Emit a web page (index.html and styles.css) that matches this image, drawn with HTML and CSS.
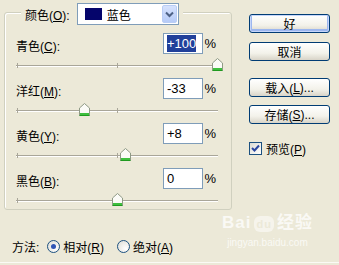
FILE: index.html
```html
<!DOCTYPE html>
<html lang="zh-CN">
<head>
    <meta charset="UTF-8">
    <title>可选颜色</title>
    <link rel="stylesheet" href="styles.css">
</head>
<body>
    <div class="dialog">
        <!-- Colour group -->
        <div class="group">
            <div class="group-head">
                <span class="head-label">颜色(<u>O</u>):</span>
                <div class="select">
                    <span class="swatch"></span>
                    <span class="select-text">蓝色</span>
                    <span class="select-btn">
                        <svg width="9" height="7" viewBox="0 0 9 7"><path d="M1 1.5 L4.5 5 L8 1.5" fill="none" stroke="#4d6185" stroke-width="2"/></svg>
                    </span>
                </div>
            </div>

            <div class="row">
                <div class="row-top">
                    <span class="row-label">青色(<u>C</u>):</span>
                    <span class="field"><span class="sel">+100</span></span>
                    <span class="pct">%</span>
                </div>
                <div class="slider"><span class="track"></span><svg class="thumb" style="left: 196px" width="11" height="13" viewBox="0 0 11 13"><path d="M0.5 12.5 V5 L5.5 0.5 L10.5 5 V12.5 Z" fill="#fbfbf7" stroke="#8f9a86"/><path d="M1 10.5 H10 M1 11.5 H10" stroke="#3fbf3f"/><path d="M0.5 12.5 H10.5" stroke="#1f9a1f"/></svg></div>
            </div>

            <div class="row">
                <div class="row-top">
                    <span class="row-label">洋红(<u>M</u>):</span>
                    <span class="field">-33</span>
                    <span class="pct">%</span>
                </div>
                <div class="slider"><span class="track"></span><svg class="thumb" style="left: 63px" width="11" height="13" viewBox="0 0 11 13"><path d="M0.5 12.5 V5 L5.5 0.5 L10.5 5 V12.5 Z" fill="#fbfbf7" stroke="#8f9a86"/><path d="M1 10.5 H10 M1 11.5 H10" stroke="#3fbf3f"/><path d="M0.5 12.5 H10.5" stroke="#1f9a1f"/></svg></div>
            </div>

            <div class="row">
                <div class="row-top">
                    <span class="row-label">黄色(<u>Y</u>):</span>
                    <span class="field">+8</span>
                    <span class="pct">%</span>
                </div>
                <div class="slider"><span class="track"></span><svg class="thumb" style="left: 104px" width="11" height="13" viewBox="0 0 11 13"><path d="M0.5 12.5 V5 L5.5 0.5 L10.5 5 V12.5 Z" fill="#fbfbf7" stroke="#8f9a86"/><path d="M1 10.5 H10 M1 11.5 H10" stroke="#3fbf3f"/><path d="M0.5 12.5 H10.5" stroke="#1f9a1f"/></svg></div>
            </div>

            <div class="row">
                <div class="row-top">
                    <span class="row-label">黑色(<u>B</u>):</span>
                    <span class="field">0</span>
                    <span class="pct">%</span>
                </div>
                <div class="slider"><span class="track"></span><svg class="thumb" style="left: 96px" width="11" height="13" viewBox="0 0 11 13"><path d="M0.5 12.5 V5 L5.5 0.5 L10.5 5 V12.5 Z" fill="#fbfbf7" stroke="#8f9a86"/><path d="M1 10.5 H10 M1 11.5 H10" stroke="#3fbf3f"/><path d="M0.5 12.5 H10.5" stroke="#1f9a1f"/></svg></div>
            </div>
        </div>

        <!-- Buttons -->
        <div class="side">
            <div class="btn btn-default">好</div>
            <div class="btn">取消</div>
            <div class="btn btn-gap">载入(<u>L</u>)...</div>
            <div class="btn">存储(<u>S</u>)...</div>
            <label class="check">
                <span class="checkbox">
                    <svg width="9" height="9" viewBox="0 0 9 9"><path d="M1 4 L3.5 6.5 L8 1.5" fill="none" stroke="#2a46a0" stroke-width="2"/></svg>
                </span>
                <span>预览(<u>P</u>)</span>
            </label>
        </div>

        <!-- Method -->
        <div class="method">
            <span class="method-label">方法:</span>
            <span class="radio"><span class="dot"></span></span>
            <span class="radio-text">相对(<u>R</u>)</span>
            <span class="radio"></span>
            <span class="radio-text">绝对(<u>A</u>)</span>
        </div>

        <!-- Watermark -->
        <div class="watermark">
            <div class="wm-logo">Bai<span class="wm-paw">du</span>经验</div>
            <div class="wm-url">jingyan.baidu.com</div>
        </div>
    </div>
</body>
</html>
```

FILE: styles.css
```css
* {
    margin: 0;
    padding: 0;
    box-sizing: border-box;
}
body {
    background-color: #ece9d8;
    font-family: 'Liberation Sans', 'Noto Sans CJK SC', sans-serif;
    font-size: 12px;
    color: #000;
}
u {
    text-decoration: underline;
    text-underline-offset: 1px;
}
.dialog {
    position: relative;
    width: 339px;
    height: 263px;
    display: grid;
    grid-template-columns: 233px 1fr;
    grid-template-rows: 210px 1fr;
    border-bottom: 1px solid #fbfaf5;
}
.group {
    margin: 12px 0 0 4px;
    width: 228px;
    height: 198px;
    border: 1px solid #d0d0bf;
    border-radius: 3px;
    box-shadow: inset 1px 1px 0 #fff;
}
.group-head {
    display: flex;
    align-items: center;
    gap: 7px;
    width: fit-content;
    margin: -10px 0 0 16px;
    padding: 0 4px;
    background-color: #ece9d8;
}
.select {
    display: flex;
    align-items: center;
    width: 102px;
    height: 22px;
    border: 1px solid #7f9db9;
    background-color: white;
    padding: 0 1px 0 7px;
}
.swatch {
    width: 17px;
    height: 12px;
    background-color: #05056b;
}
.select-text {
    flex: 1;
    margin-left: 5px;
}
.select-btn {
    width: 15px;
    height: 18px;
    display: flex;
    align-items: center;
    justify-content: center;
    background: linear-gradient(#d6e2fd, #b6cbf7);
    border: 1px solid #b9cdf5;
    border-radius: 2px;
}
.row {
    margin-top: 8px;
}
.row + .row {
    margin-top: 6px;
}
.row-top {
    display: flex;
    align-items: center;
    height: 21px;
    padding: 0 15px 0 11px;
}
.row-label {
    flex: 1;
    padding-top: 4px;
}
.field {
    width: 40px;
    height: 21px;
    border: 1px solid #7f9db9;
    background-color: white;
    padding: 2px 0 0 3px;
    line-height: 15px;
    font-size: 13px;
}
.sel {
    background-color: #21409a;
    color: white;
    padding: 1px 0;
}
.pct {
    width: 13px;
    text-align: right;
    font-size: 13px;
}
.slider {
    position: relative;
    margin: 4px 0 0 11px;
    width: 202px;
    height: 14px;
}
.track {
    position: absolute;
    left: 0;
    right: 0;
    top: 7px;
    height: 2px;
    border-top: 1px solid #a9a699;
    border-bottom: 1px solid #fff;
}
.track::before,
.track::after {
    content: '';
    position: absolute;
    top: -3px;
    width: 1px;
    height: 5px;
    background-color: #a9a699;
}
.track::before {
    left: 1px;
}
.track::after {
    left: 101px;
}
.thumb {
    position: absolute;
    top: 0;
}
.side {
    padding: 14px 9px 0 16px;
}
.btn {
    height: 19px;
    border: 1px solid #003c74;
    border-radius: 3px;
    background: linear-gradient(#ffffff, #f3f2ea 60%, #d8d4c8);
    display: flex;
    align-items: center;
    justify-content: center;
    margin-bottom: 9px;
}
.btn-default {
    box-shadow: inset 0 0 0 1px #c6d6fa, inset 0 -1px 0 2px #9db7ef;
}
.btn-gap {
    margin-top: 17px;
}
.btn:nth-child(3) {
    margin-bottom: 8px;
}
.check {
    display: flex;
    align-items: center;
    gap: 4px;
    margin-top: 16px;
}
.checkbox {
    width: 13px;
    height: 13px;
    border: 1px solid #1c5180;
    background: linear-gradient(135deg, #dcdcd4, #fff);
    display: flex;
    align-items: center;
    justify-content: center;
}
.method {
    grid-column: 1 / 3;
    display: flex;
    align-items: center;
    padding: 22px 0 0 12px;
    height: 50px;
}
.method-label {
    margin-right: 8px;
}
.radio {
    width: 13px;
    height: 13px;
    border-radius: 50%;
    border: 1px solid #1c5180;
    background: radial-gradient(circle at 70% 70%, #fff, #dcdcd4);
    display: flex;
    align-items: center;
    justify-content: center;
    margin-right: 3px;
}
.dot {
    width: 5px;
    height: 5px;
    border-radius: 50%;
    background-color: #2f55b5;
}
.radio-text {
    margin-right: 13px;
}
.watermark {
    position: absolute;
    left: 222px;
    top: 211px;
    color: rgba(255, 255, 255, 0.75);
    text-align: center;
}
.wm-logo {
    font-size: 17px;
    font-weight: bold;
    line-height: 24px;
    letter-spacing: 1px;
}
.wm-paw {
    font-size: 11px;
    padding: 2px;
    border-radius: 6px;
    background-color: rgba(255, 255, 255, 0.5);
    color: #ece9d8;
    margin: 0 3px;
}
.wm-url {
    font-size: 10px;
    line-height: 14px;
}
```
